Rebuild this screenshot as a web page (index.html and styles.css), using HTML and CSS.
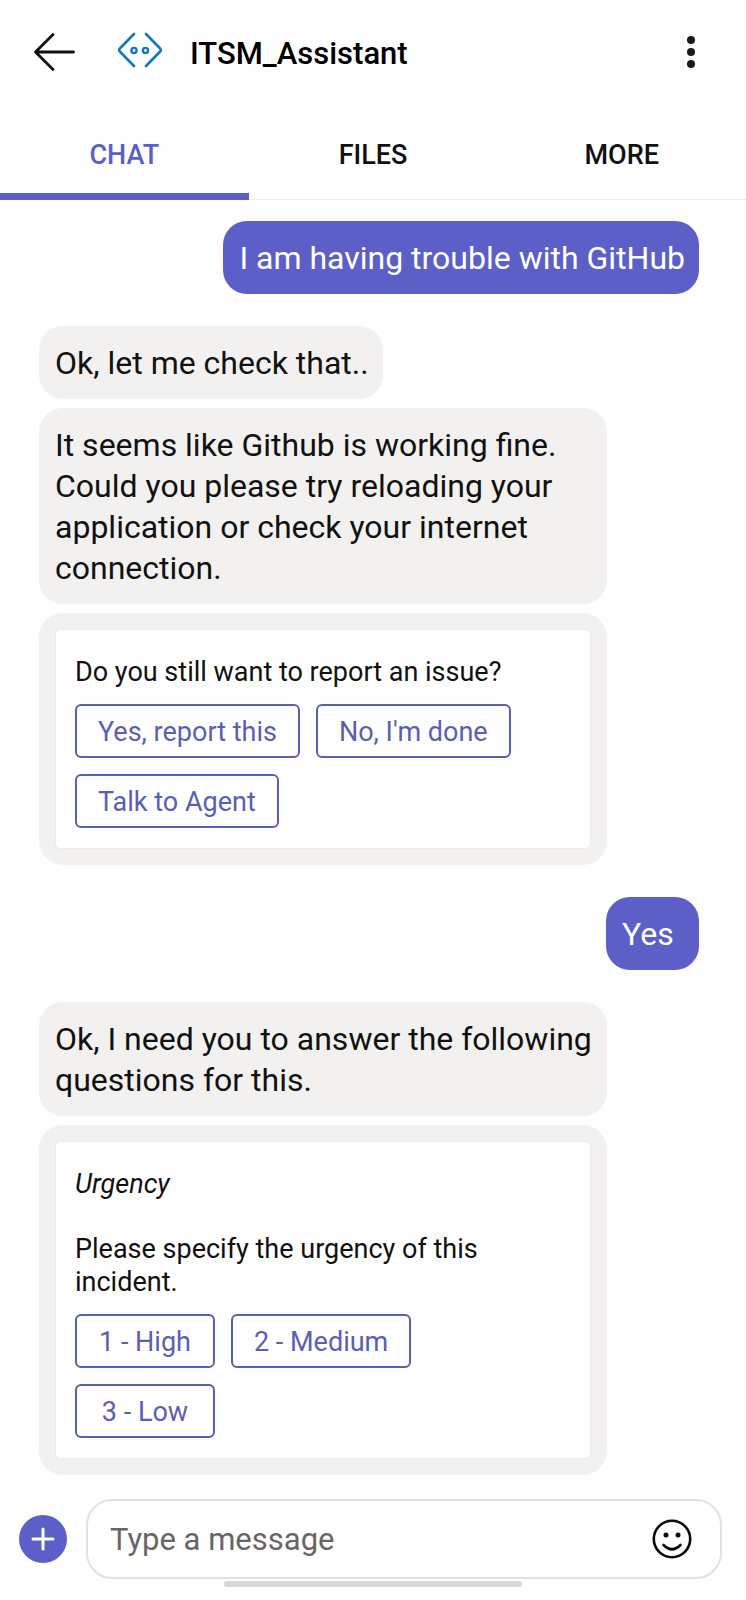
FILE: index.html
```html
<!DOCTYPE html>
<html lang="en">
<head>
<meta charset="utf-8">
<meta name="viewport" content="width=device-width, initial-scale=1">
<title>ITSM_Assistant</title>
<link rel="stylesheet" href="styles.css">
</head>
<body>
<div class="app">
  <header class="header">
    <button class="icon-button" type="button" aria-label="Back">
      <svg width="44" height="40" viewBox="0 0 44 40" fill="none" stroke="#111" stroke-width="2.800" stroke-linecap="round" stroke-linejoin="round"><path d="M40.500 20H3M20 2.500 2.500 20 20 37.500"/></svg>
    </button>
    <svg class="bot-logo" width="46" height="36" viewBox="0 0 46 36" fill="none" stroke="#1279b8" stroke-width="2.600" stroke-linecap="round" stroke-linejoin="round" aria-hidden="true"><path d="M17 2 2.800 16.500q-1.300 1.500 0 3L17 34M29 2l14.200 14.500q1.300 1.500 0 3L29 34"/><circle cx="17" cy="18.500" r="2.600" stroke-width="2.400"/><circle cx="28.500" cy="18.500" r="2.600" stroke-width="2.400"/></svg>
    <h1 class="title">ITSM_Assistant</h1>
    <button class="icon-button" type="button" aria-label="More options">
      <svg width="10" height="34" viewBox="0 0 10 34" fill="#1a1a1a"><circle cx="5" cy="5" r="4"/><circle cx="5" cy="17" r="4"/><circle cx="5" cy="29" r="4"/></svg>
    </button>
  </header>

  <nav class="tabs">
    <a class="tab tab-active" href="#chat" aria-current="page">CHAT</a>
    <a class="tab" href="#files">FILES</a>
    <a class="tab" href="#more">MORE</a>
  </nav>

  <main class="thread">
    <div class="group group-user"><p class="bubble bubble-user">I am having trouble with GitHub</p></div>
    <div class="group">
      <p class="bubble">Ok, let me check that..</p>
      <p class="bubble">It seems like Github is working fine. Could you please try reloading your application or check your internet connection.</p>
      <section class="bubble bubble-card">
        <div class="card">
          <p class="card-text">Do you still want to report an issue?</p>
          <div class="actions">
            <button class="action" type="button">Yes, report this</button>
            <button class="action" type="button">No, I'm done</button>
            <button class="action" type="button">Talk to Agent</button>
          </div>
        </div>
      </section>
    </div>
    <div class="group group-user"><p class="bubble bubble-user">Yes</p></div>
    <div class="group">
      <p class="bubble">Ok, I need you to answer the following questions for this.</p>
      <section class="bubble bubble-card">
        <div class="card">
          <p class="card-text card-heading"><em>Urgency</em></p>
          <p class="card-text">Please specify the urgency of this incident.</p>
          <div class="actions">
            <button class="action" type="button">1 - High</button>
            <button class="action" type="button">2 - Medium</button>
            <button class="action" type="button">3 - Low</button>
          </div>
        </div>
      </section>
    </div>
  </main>

  <form class="composer">
    <button class="add" type="button" aria-label="Add">
      <svg width="24" height="24" viewBox="0 0 24 24" fill="none" stroke="#fff" stroke-width="3" stroke-linecap="round"><path d="M12 2v20M2 12h20"/></svg>
    </button>
    <div class="field">
      <input class="input" type="text" placeholder="Type a message" aria-label="Type a message">
      <button class="icon-button" type="button" aria-label="Emoji">
        <svg width="40" height="40" viewBox="0 0 40 40" fill="none" stroke="#0a0a0a" stroke-width="2.600" stroke-linecap="round"><circle cx="20" cy="20" r="18.200"/><path d="M11.500 26q8.500 8.500 17 0"/><circle cx="14" cy="16" r="2.500" fill="#0a0a0a" stroke="none"/><circle cx="26" cy="16" r="2.500" fill="#0a0a0a" stroke="none"/></svg>
      </button>
    </div>
  </form>
  <div class="home-bar"></div>
</div>
</body>
</html>
```
FILE: styles.css
```css
* {
  box-sizing: border-box;
}

body {
  margin: 0;
  background: #fefefe;
  color: #111;
  font-family: Roboto, "Liberation Sans", sans-serif;
}

p,
h1 {
  margin: 0;
}

button {
  font: inherit;
  cursor: pointer;
}

.app {
  display: flex;
  flex-direction: column;
  min-height: 100vh;
}

.header {
  display: flex;
  align-items: center;
  height: 104px;
  padding: 0 50px 0 33px;
}

.icon-button {
  display: flex;
  padding: 0;
  border: 0;
  background: none;
}

.bot-logo {
  margin: 0 27px 4px 40px;
}

.title {
  flex: 1;
  padding-top: 3px;
  font-size: 31px;
  font-weight: 500;
  line-height: 40px;
  color: #000;
}

.tabs {
  display: flex;
  height: 96px;
  border-bottom: 1px solid #ececec;
}

.tab {
  flex: 1;
  height: 96px;
  padding-top: 36px;
  border-bottom: 7px solid transparent;
  color: #111;
  font-size: 27px;
  font-weight: 500;
  line-height: 30px;
  text-align: center;
  text-decoration: none;
}

.tab-active {
  border-color: #5b5fc7;
  color: #5b5fc7;
}

.thread {
  display: flex;
  flex: 1;
  flex-direction: column;
  gap: 32px;
  padding: 21px 47px 24px 39px;
}

.group {
  display: flex;
  flex-direction: column;
  align-items: flex-start;
  gap: 9px;
}

.group-user {
  align-items: flex-end;
}

.bubble {
  min-width: 93px;
  max-width: 86%;
  padding: 17px 14px 15px 16px;
  border-radius: 24px;
  background: #f2f1f0;
  font-size: 32px;
  line-height: 41px;
}

.bubble-user {
  background: #5b5fc7;
  color: #fff;
}

.bubble-card {
  width: 100%;
  padding: 16px;
}

.card {
  padding: 26px 19px 20px;
  border: 1px solid #ebeae9;
  border-radius: 5px;
  background: #fefefe;
}

.card-text {
  font-size: 27px;
  line-height: 33px;
}

.card-heading {
  margin-bottom: 32px;
}

.actions {
  display: flex;
  flex-wrap: wrap;
  gap: 16px;
  margin-top: 15px;
  padding-right: 16px;
}

.action {
  min-width: 140px;
  height: 54px;
  padding: 2px 21px 0;
  border: 2px solid #5b5fb4;
  border-radius: 6px;
  background: transparent;
  color: #5b5fb4;
  font-size: 27px;
  line-height: 32px;
}

.composer {
  display: flex;
  align-items: center;
  gap: 19px;
  padding: 0 24px 0 19px;
}

.add {
  display: flex;
  flex: none;
  align-items: center;
  justify-content: center;
  width: 48px;
  height: 48px;
  padding: 0;
  border: 0;
  border-radius: 50%;
  background: #5b5fc7;
}

.field {
  display: flex;
  flex: 1;
  align-items: center;
  height: 80px;
  padding: 0 28px 0 22px;
  border: 2px solid #e1e1e1;
  border-radius: 26px;
}

.input {
  flex: 1;
  min-width: 0;
  padding: 2px 0 0;
  border: 0;
  outline: 0;
  background: none;
  color: #111;
  font: inherit;
  font-size: 31px;
  line-height: 40px;
}

.input::placeholder {
  color: #666;
  opacity: 1;
}

.home-bar {
  width: 40%;
  height: 6px;
  margin: 2px auto 13px;
  border-radius: 3px;
  background: #d8d8d8;
}
```
